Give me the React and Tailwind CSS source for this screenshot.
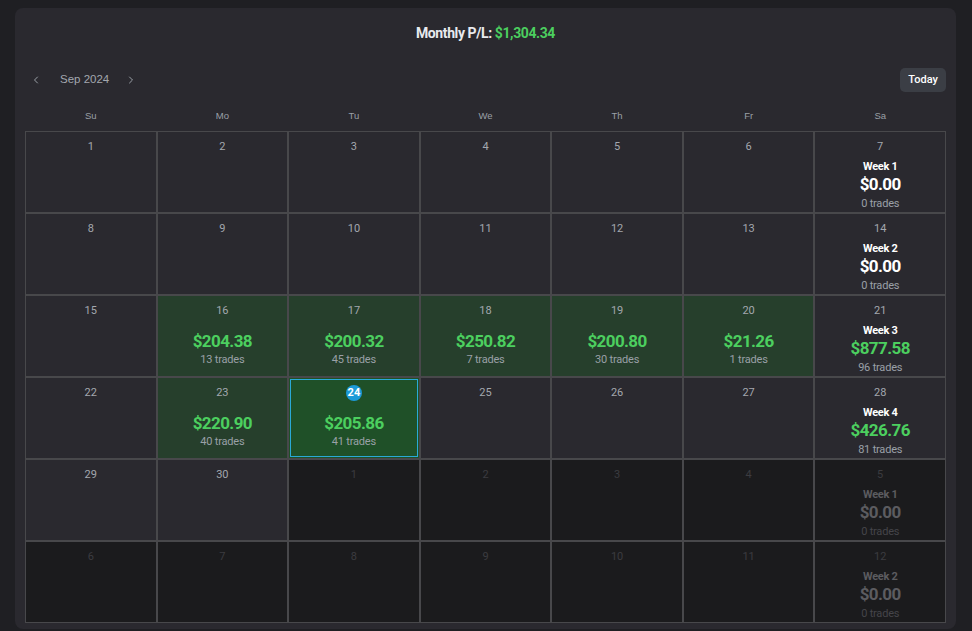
import React from "react";
import { ChevronLeft, ChevronRight } from "lucide-react";

const WEEKDAYS = ["Su", "Mo", "Tu", "We", "Th", "Fr", "Sa"];

// day: number shown, out: outside current month, pnl / trades for days with activity,
// week: weekly summary shown in the Saturday column
const ROWS = [
  [
    { day: 1 }, { day: 2 }, { day: 3 }, { day: 4 }, { day: 5 }, { day: 6 },
    { day: 7, week: 1, pnl: "$0.00", trades: 0, zero: true },
  ],
  [
    { day: 8 }, { day: 9 }, { day: 10 }, { day: 11 }, { day: 12 }, { day: 13 },
    { day: 14, week: 2, pnl: "$0.00", trades: 0, zero: true },
  ],
  [
    { day: 15 },
    { day: 16, pnl: "$204.38", trades: 13 },
    { day: 17, pnl: "$200.32", trades: 45 },
    { day: 18, pnl: "$250.82", trades: 7 },
    { day: 19, pnl: "$200.80", trades: 30 },
    { day: 20, pnl: "$21.26", trades: 1 },
    { day: 21, week: 3, pnl: "$877.58", trades: 96 },
  ],
  [
    { day: 22 },
    { day: 23, pnl: "$220.90", trades: 40 },
    { day: 24, pnl: "$205.86", trades: 41, today: true },
    { day: 25 }, { day: 26 }, { day: 27 },
    { day: 28, week: 4, pnl: "$426.76", trades: 81 },
  ],
  [
    { day: 29 }, { day: 30 },
    { day: 1, out: true }, { day: 2, out: true }, { day: 3, out: true }, { day: 4, out: true },
    { day: 5, out: true, week: 1, pnl: "$0.00", trades: 0, zero: true },
  ],
  [
    { day: 6, out: true }, { day: 7, out: true }, { day: 8, out: true }, { day: 9, out: true },
    { day: 10, out: true }, { day: 11, out: true },
    { day: 12, out: true, week: 2, pnl: "$0.00", trades: 0, zero: true },
  ],
];

const roboto = { fontFamily: "Roboto, 'Liberation Sans', sans-serif" };

function DayCell({ cell }) {
  const { day, out, pnl, trades, week, today, zero } = cell;

  let bg = "bg-[#2a292f]";
  if (out) bg = "bg-[#1b1b1d]";
  else if (today) bg = "bg-[#1f5028] shadow-[inset_0_0_0_1px_#1f5028,inset_0_0_0_2px_#2aa9d6]";
  else if (pnl && !week) bg = "bg-[#263f2c]";

  const numColor = out ? "text-[#3c3c40]" : "text-[#a3a7ae]";
  const tradeColor = out ? "text-[#45454a]" : "text-[#9aa0a7]";
  let amtColor = "text-[#4ccf5f]";
  if (zero) amtColor = out ? "text-[#5c5c60]" : "text-white";

  return (
    <div
      className={`h-[82px] border border-[#48484b] ${bg} flex flex-col items-center pt-[7px]`}
      style={roboto}
    >
      {today ? (
        <span className="w-4 h-4 rounded-full bg-[#1c9ad8] text-white text-[11px] font-bold leading-4 text-center">
          {day}
        </span>
      ) : (
        <span className={`text-[11px] leading-4 ${numColor}`}>{day}</span>
      )}

      {week ? (
        <>
          <span
            className={`mt-[5px] text-[11px] leading-[14px] font-bold tracking-[-0.3px] ${out ? "text-[#5c5c60]" : "text-white"}`}
          >
            Week {week}
          </span>
          <span className={`text-[17px] leading-5 font-bold tracking-[-0.6px] ${amtColor}`}>
            {pnl}
          </span>
          <span className={`mt-[3px] text-[11px] leading-[14px] tracking-[-0.2px] ${tradeColor}`}>
            {trades} trades
          </span>
        </>
      ) : pnl ? (
        <>
          <span className={`mt-[12px] text-[17px] leading-5 font-bold tracking-[-0.6px] ${amtColor}`}>
            {pnl}
          </span>
          <span className={`mt-[2px] text-[11px] leading-[14px] tracking-[-0.2px] ${tradeColor}`}>
            {trades} trades
          </span>
        </>
      ) : null}
    </div>
  );
}

export default function App() {
  return (
    <div className="min-h-screen bg-[#1f1f23] pt-2 px-[15px]">
      <div className="w-[941px] bg-[#2a292f] rounded-lg px-[10px] pb-[6px]">
        {/* monthly total */}
        <div className="h-[50px] flex items-center justify-center" style={roboto}>
          <span className="text-[14px] font-bold tracking-[-0.4px] text-[#e8eaee]">
            Monthly P/L:{" "}
            <span className="text-[#4ccf5f]">$1,304.34</span>
          </span>
        </div>

        {/* month navigation */}
        <div
          className="h-[44px] flex items-center"
          style={{ fontFamily: "'Liberation Sans', Arial, sans-serif" }}
        >
          <button type="button" className="w-[22px] h-6 flex items-center justify-center text-[#9aa0a7]">
            <ChevronLeft size={12} strokeWidth={2} />
          </button>
          <span className="ml-[13px] text-[11.5px] text-[#a3a7ae]">Sep 2024</span>
          <button type="button" className="ml-[11px] w-[22px] h-6 flex items-center justify-center text-[#9aa0a7]">
            <ChevronRight size={12} strokeWidth={2} />
          </button>
          <button
            type="button"
            className="ml-auto h-6 px-[8px] rounded-[5px] bg-[#3b3e45] text-white text-[11px] font-medium"
            style={roboto}
          >
            Today
          </button>
        </div>

        {/* weekday header */}
        <div
          className="grid grid-cols-7 h-[29px] items-center"
          style={{ fontFamily: "'Liberation Sans', Arial, sans-serif" }}
        >
          {WEEKDAYS.map((d) => (
            <span key={d} className="text-center text-[9.5px] text-[#9aa0a7]">
              {d}
            </span>
          ))}
        </div>

        {/* calendar grid */}
        <div className="grid grid-cols-7">
          {ROWS.flat().map((cell, i) => (
            <DayCell key={i} cell={cell} />
          ))}
        </div>
      </div>
    </div>
  );
}
